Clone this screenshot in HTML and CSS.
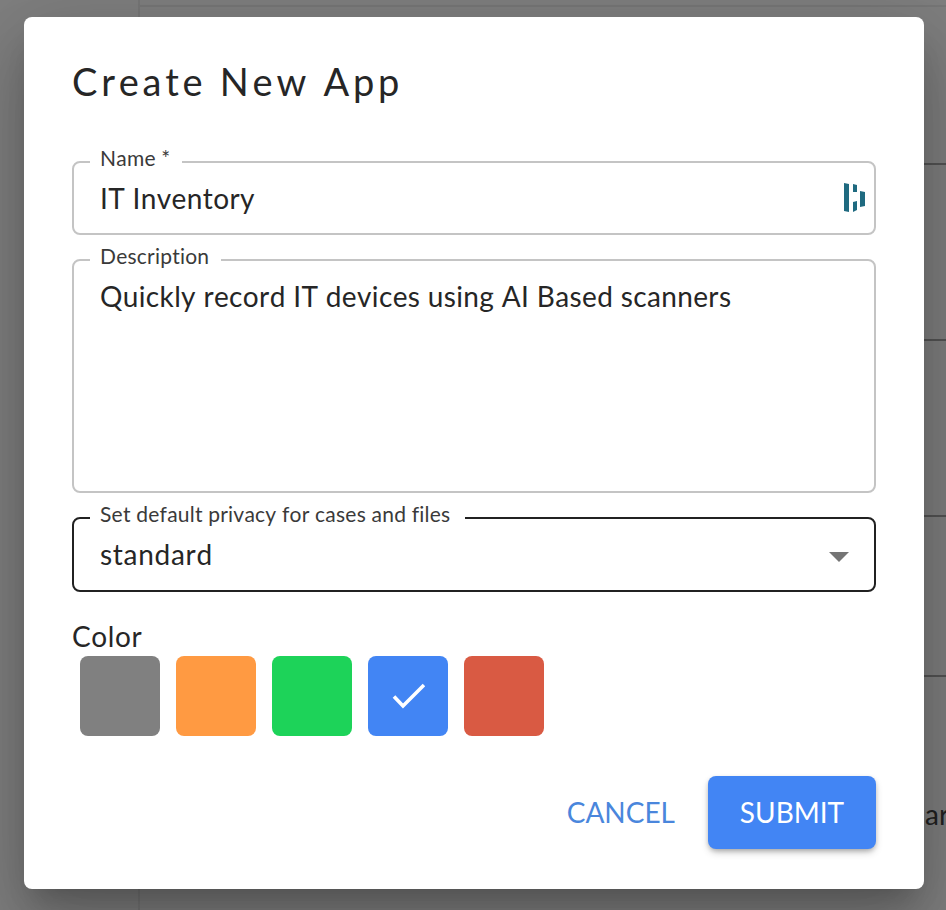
FILE: index.html
```html
<!DOCTYPE html>
<html lang="en">
<head>
<meta charset="utf-8">
<title>Create New App</title>
<link rel="stylesheet" href="styles.css">
</head>
<body>
<div class="page">
  <aside class="sidebar"></aside>
  <main class="list">
    <div class="row row-first"></div>
    <div class="row"></div>
    <div class="row"></div>
    <div class="row row-short"></div>
    <div class="row row-last"><span class="row-text">ar</span></div>
  </main>
</div>
<div class="backdrop"></div>
<section class="modal">
  <h1 class="title">Create New App</h1>
  <div class="field field-name">
    <span class="label">Name *</span>
    <span class="value">IT Inventory</span>
    <svg class="logo" viewBox="0 0 22 30" width="22" height="30" aria-hidden="true">
      <polygon points="0,0 5,1 5,29 0,28" fill="#1f6a80"/>
      <polygon points="9,1 13,2 13,9 9,9" fill="#1f6a80"/>
      <polygon points="9,19 13,18 13,27 9,29" fill="#1f6a80"/>
      <polygon points="16,8 21,9 21,23 16,24" fill="#1f6a80"/>
    </svg>
  </div>
  <div class="field field-desc">
    <span class="label">Description</span>
    <span class="value">Quickly record IT devices using AI Based scanners</span>
  </div>
  <div class="field field-select">
    <span class="label label-wide">Set default privacy for cases and files</span>
    <span class="value value-wide">standard</span>
    <svg class="caret" viewBox="0 0 20 10" width="20" height="10" aria-hidden="true">
      <polygon points="0,0 20,0 10,10" fill="#757575"/>
    </svg>
  </div>
  <div class="color-label">Color</div>
  <div class="swatches">
    <div class="swatch grey"></div>
    <div class="swatch orange"></div>
    <div class="swatch green"></div>
    <div class="swatch blue">
      <svg viewBox="0 0 34 28" width="34" height="28" aria-hidden="true">
        <path d="M3 14.5 L12 24 L33 3" fill="none" stroke="#fff" stroke-width="3.6"/>
      </svg>
    </div>
    <div class="swatch red"></div>
  </div>
  <div class="actions">
    <button class="btn btn-text" type="button">CANCEL</button>
    <button class="btn btn-primary" type="button">SUBMIT</button>
  </div>
</section>
</body>
</html>
```
FILE: styles.css
```css
* { box-sizing: border-box; }
html, body { margin: 0; height: 100%; }
body {
  width: 946px;
  height: 910px;
  overflow: hidden;
  background: #fff;
  font-family: Lato, "Open Sans", sans-serif;
  font-kerning: none;
  color: #262626;
}
.page { display: flex; height: 910px; }
.sidebar { width: 140px; border-right: 2px solid #eee; }
.list { flex: 1; min-width: 0; padding-top: 5px; overflow: hidden; }
.row { height: 176px; border-bottom: 2px solid #a8a8a8; }
.row-first { height: 160px; border-top: 2px solid #eee; }
.row-short { height: 160px; }
.row-last { height: 200px; border-bottom: 0; padding: 120px 0 0 785px; }
.row-text { font-size: 28px; line-height: 34px; white-space: nowrap; color: #444; }
.backdrop { position: absolute; inset: 0; background: rgba(0, 0, 0, .5); }
.modal {
  position: absolute;
  left: 24px;
  top: 17px;
  width: 900px;
  height: 872px;
  padding: 39px 48px 0;
  display: flex;
  flex-direction: column;
  background: #fff;
  border-radius: 8px;
  box-shadow: 0 19px 26px -12px rgba(0,0,0,.2), 0 42px 66px 5px rgba(0,0,0,.14), 0 16px 80px 14px rgba(0,0,0,.12);
}
.title {
  margin: 0 0 55px;
  font-size: 38px;
  line-height: 50px;
  font-weight: 400;
  letter-spacing: 3.75px;
}
.field {
  position: relative;
  display: flex;
  align-items: flex-start;
  margin-bottom: 24px;
  padding: 17px 26px 0;
  border: 2px solid #c4c4c4;
  border-radius: 8px;
}
.field-name { height: 74px; }
.field-desc { height: 234px; }
.field-select { height: 75px; border-color: #212121; }
.label {
  position: absolute;
  left: 16px;
  top: -18px;
  padding: 0 12px 0 10px;
  background: #fff;
  font-size: 21px;
  line-height: 26px;
  letter-spacing: .22px;
  color: #3a3a3a;
  white-space: nowrap;
}
.label-wide { padding-right: 15px; }
.value { font-size: 28px; line-height: 36px; letter-spacing: .36px; white-space: nowrap; }
.value-wide { letter-spacing: .7px; }
.logo { position: absolute; right: 8px; top: 20px; }
.caret { position: absolute; right: 25px; top: 33px; }
.color-label { font-size: 28px; line-height: 34px; margin-top: 3px; letter-spacing: .6px; }
.swatches { display: flex; gap: 16px; padding-left: 8px; margin-top: 3px; }
.swatch {
  width: 80px;
  height: 80px;
  border-radius: 8px;
  display: flex;
  align-items: center;
  justify-content: center;
}
.grey { background: #808080; }
.orange { background: #ff9a42; }
.green { background: #1dd359; }
.blue { background: #4285f4; }
.red { background: #d95a43; }
.actions { display: flex; justify-content: flex-end; align-items: center; gap: 33px; margin-top: 40px; }
.btn {
  font-family: inherit;
  font-size: 28px;
  line-height: 34px;
  border: 0;
  background: none;
  padding: 0 0 2px;
  cursor: pointer;
}
.btn-text { color: #4a86dc; }
.btn-primary {
  width: 168px;
  height: 73px;
  color: #fff;
  background: #4285f4;
  border-radius: 8px;
  box-shadow: 0 4px 8px -2px rgba(0,0,0,.3), 0 2px 4px rgba(0,0,0,.14);
}
```
